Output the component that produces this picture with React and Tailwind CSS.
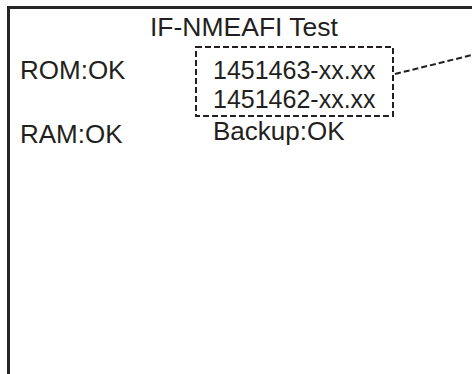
export default function App() {
  return (
    <div className="relative w-[472px] h-[374px] overflow-hidden bg-white text-[#231f20] font-['Liberation_Sans',Arial,sans-serif] text-[26px] leading-[29px]">
      <div className="ml-[7px] mt-[6px] h-[368px] w-[600px] border-t-[3px] border-l-[3px] border-[#262626]">
        <div className="pt-[3px] pl-[6px] w-[462px] text-center text-[26.5px] leading-[30px]">
          IF-NMEAFI Test
        </div>
        <div className="mt-[4px] grid grid-cols-[185px_auto] justify-start">
          <div className="pl-[10px] pt-[10px]">ROM:OK</div>
          <div className="relative w-[199px] pt-[10px] pb-[3px] pl-[18px] text-[25px]">
            <svg className="absolute inset-0" width="199" height="71">
              <rect
                x="1"
                y="1"
                width="197"
                height="69"
                fill="none"
                stroke="#231f20"
                strokeWidth="2"
                strokeDasharray="6 3"
              />
            </svg>
            <div>1451463-xx.xx</div>
            <div>1451462-xx.xx</div>
          </div>
          <div className="pl-[10px] pt-[3px]">RAM:OK</div>
          <div className="pl-[18px]">Backup:OK</div>
        </div>
      </div>
      <svg className="absolute left-0 top-0" width="472" height="374">
        <line
          x1="395"
          y1="74"
          x2="472"
          y2="55"
          stroke="#231f20"
          strokeWidth="2"
          strokeDasharray="6 3"
        />
      </svg>
    </div>
  );
}
